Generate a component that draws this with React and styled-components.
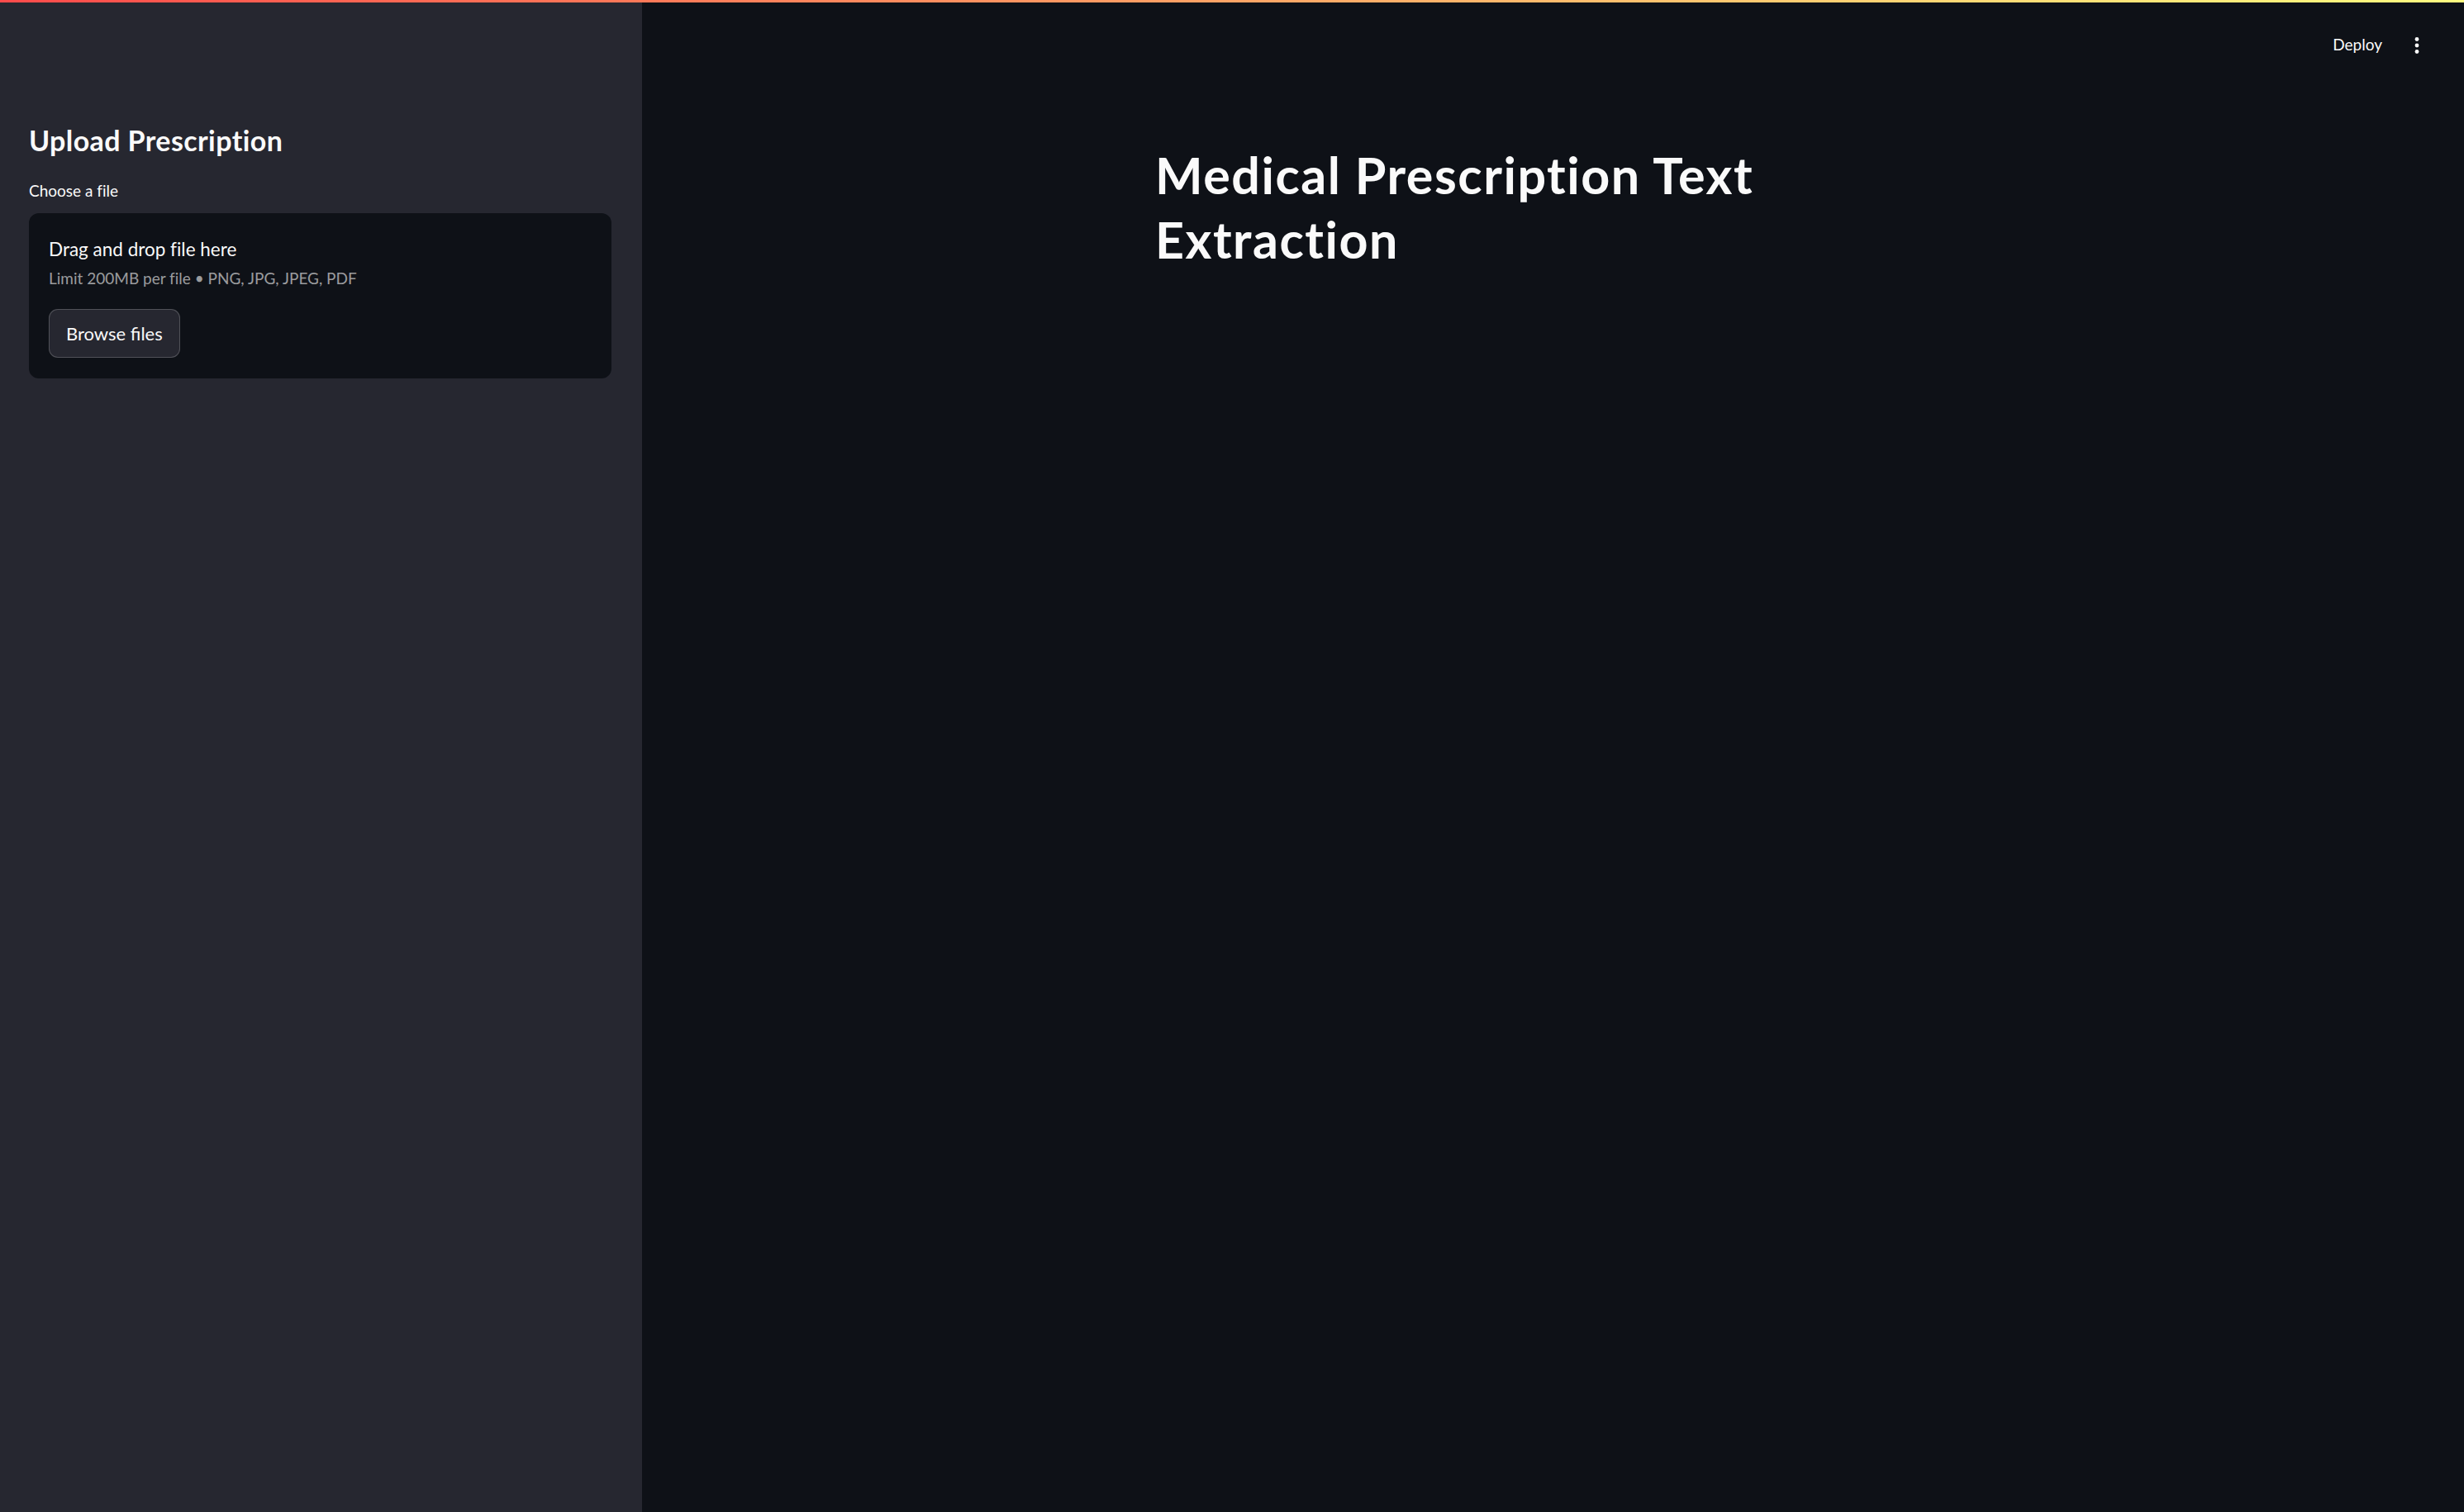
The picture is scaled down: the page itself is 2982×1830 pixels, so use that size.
import styled, { createGlobalStyle } from "styled-components";

const GlobalStyle = createGlobalStyle`
  html, body {
    margin: 0;
    padding: 0;
    background-color: #0e1117;
  }
  * {
    box-sizing: border-box;
  }
`;

const Page = styled.div`
  display: flex;
  flex-direction: column;
  height: 100vh;
  font-family: "Lato", "Noto Sans", sans-serif;
  font-variant-ligatures: no-common-ligatures;
  color: #fafafa;
  overflow: hidden;
`;

const Decoration = styled.div`
  height: 3px;
  flex-shrink: 0;
  background-image: linear-gradient(90deg, rgb(255, 75, 75), rgb(255, 253, 128));
`;

const Body = styled.div`
  display: flex;
  flex: 1;
  min-height: 0;
`;

const Sidebar = styled.aside`
  width: 777px;
  flex-shrink: 0;
  background-color: #262730;
  padding: 147px 37px 0 35px;
  display: flex;
  flex-direction: column;
`;

const SidebarTitle = styled.h2`
  margin: 0;
  font-size: 34px;
  font-weight: 700;
  line-height: 1.2;
  letter-spacing: 0.4px;
`;

const Label = styled.label`
  margin-top: 29px;
  font-size: 19px;
  line-height: 1.2;
`;

const Dropzone = styled.section`
  margin-top: 15px;
  background-color: #0e1117;
  border-radius: 12px;
  padding: 30px 24px 25px;
  display: flex;
  flex-direction: column;
  align-items: flex-start;
`;

const DropTitle = styled.span`
  font-size: 22.5px;
  line-height: 1.2;
`;

const DropHint = styled.small`
  margin-top: 11px;
  font-size: 19px;
  line-height: 1.2;
  color: rgba(250, 250, 250, 0.6);
`;

const Button = styled.button`
  margin-top: 26px;
  height: 59px;
  padding: 0 20px;
  display: flex;
  align-items: center;
  background-color: #262730;
  border: 1.5px solid rgba(250, 250, 250, 0.2);
  border-radius: 11px;
  color: #fafafa;
  font-family: inherit;
  font-size: 22px;
  cursor: pointer;
`;

const Main = styled.main`
  flex: 1;
  display: flex;
  flex-direction: column;
`;

const Header = styled.header`
  height: 103px;
  display: flex;
  align-items: center;
  justify-content: flex-end;
  gap: 25px;
  padding-right: 40px;
`;

const HeaderButton = styled.button`
  background: none;
  border: none;
  padding: 0;
  color: #fafafa;
  font-family: inherit;
  font-size: 19px;
  line-height: 1.2;
  cursor: pointer;
`;

const MenuButton = styled(HeaderButton)`
  width: 34px;
  height: 34px;
  display: flex;
  align-items: center;
  justify-content: center;
`;

const Content = styled.div`
  width: 963px;
  margin: 0 auto;
`;

const Title = styled.h1`
  margin: 67px 0 0;
  font-size: 61px;
  font-weight: 700;
  line-height: 78px;
  letter-spacing: 1.5px;
`;

const KebabIcon = () => (
  <svg width="8" height="22" viewBox="0 0 8 22">
    <circle cx="4" cy="3.5" r="2.4" fill="#fafafa" />
    <circle cx="4" cy="11" r="2.4" fill="#fafafa" />
    <circle cx="4" cy="18.5" r="2.4" fill="#fafafa" />
  </svg>
);

const App = () => {
  return (
    <Page>
      <GlobalStyle />
      <Decoration />
      <Body>
        <Sidebar>
          <SidebarTitle>Upload Prescription</SidebarTitle>
          <Label>Choose a file</Label>
          <Dropzone>
            <DropTitle>Drag and drop file here</DropTitle>
            <DropHint>Limit 200MB per file • PNG, JPG, JPEG, PDF</DropHint>
            <Button>Browse files</Button>
          </Dropzone>
        </Sidebar>
        <Main>
          <Header>
            <HeaderButton>Deploy</HeaderButton>
            <MenuButton>
              <KebabIcon />
            </MenuButton>
          </Header>
          <Content>
            <Title>Medical Prescription Text Extraction</Title>
          </Content>
        </Main>
      </Body>
    </Page>
  );
};

export default App;
